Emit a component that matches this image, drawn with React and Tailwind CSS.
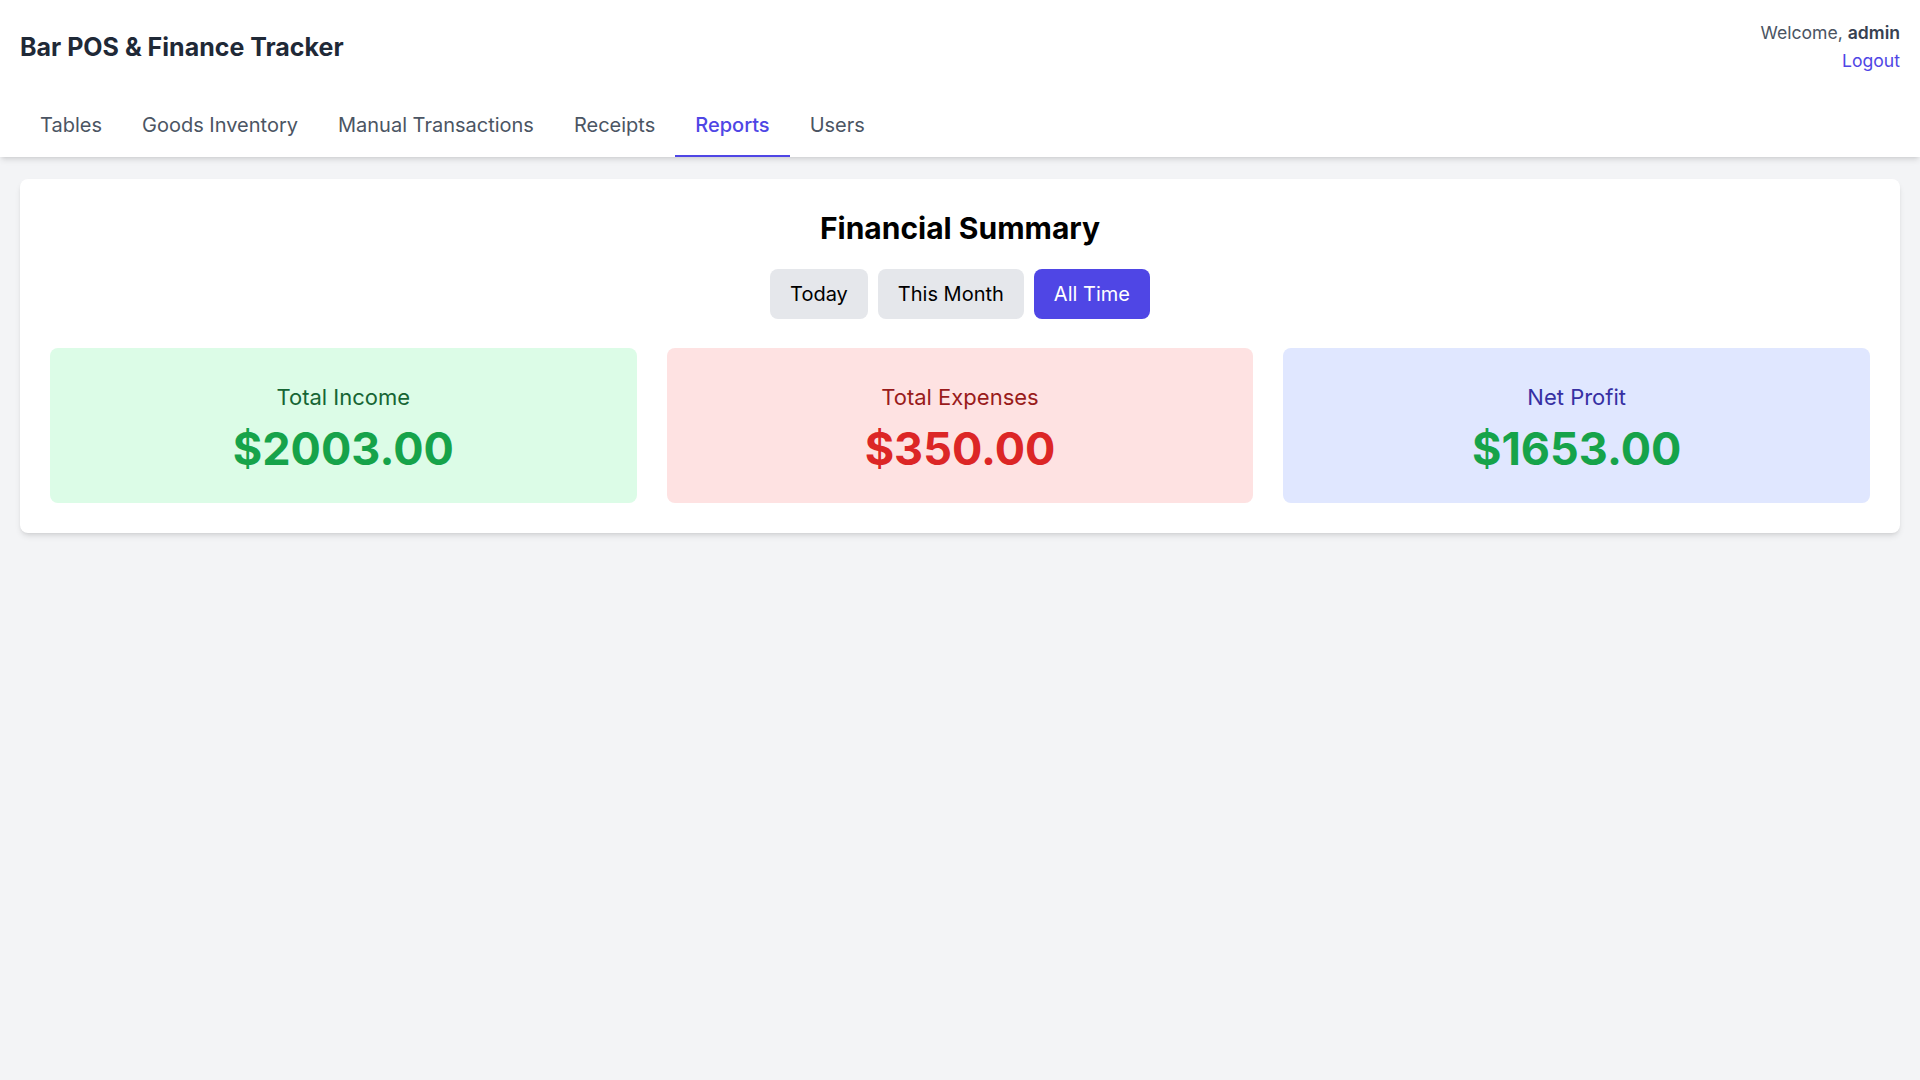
import React, { useState } from "react";

const tabs = ["Tables", "Goods Inventory", "Manual Transactions", "Receipts", "Reports", "Users"];
const ranges = ["Today", "This Month", "All Time"];

export default function App() {
  const [active, setActive] = useState("Reports");
  const [range, setRange] = useState("All Time");
  return (
    <div className="min-h-screen bg-[#f3f4f6] font-['Inter',sans-serif]">
      <header className="bg-white shadow-md">
        <div className="flex items-center justify-between px-5 pt-[19px] pb-[20px]">
          <h1 className="text-[25px] leading-8 font-bold text-[#1f2937]">Bar POS &amp; Finance Tracker</h1>
          <div className="flex flex-col items-end text-[17.6px] leading-[28px]">
            <span className="text-[#4b5563]">
              Welcome, <span className="font-semibold text-[#374151]">admin</span>
            </span>
            <a className="text-[#4f46e5]" href="#">Logout</a>
          </div>
        </div>
        <nav className="flex px-5">
          {tabs.map((t) => (
            <button
              key={t}
              onClick={() => setActive(t)}
              className={
                t === active
                  ? "border-b-2 border-[#4f46e5] px-5 py-4 text-xl leading-7 font-medium text-[#4f46e5]"
                  : "border-b-2 border-transparent px-5 py-4 text-xl leading-7 text-[#4b5563]"
              }
            >
              {t}
            </button>
          ))}
        </nav>
      </header>
      <main className="px-5 pt-[22px] pb-5">
        <section className="rounded-lg bg-white px-[30px] pt-[31px] pb-[30px] shadow-md">
          <h2 className="text-center text-3xl font-bold text-black">Financial Summary</h2>
          <div className="mt-[23px] flex justify-center gap-[10px]">
            {ranges.map((r) => (
              <button
                key={r}
                onClick={() => setRange(r)}
                className={
                  r === range
                    ? "rounded-lg bg-[#4f46e5] px-5 py-[11px] text-xl leading-7 text-white"
                    : "rounded-lg bg-[#e5e7eb] px-5 py-[11px] text-xl leading-7 text-black"
                }
              >
                {r}
              </button>
            ))}
          </div>
          <div className="mt-[29px] grid grid-cols-3 gap-[30px]">
            <div className="rounded-lg bg-[#dcfce7] pt-[35px] pb-[30px] text-center">
              <div className="text-[22px] leading-7 text-[#166534]">Total Income</div>
              <div className="mt-[14px] text-[45px] leading-[48px] font-bold text-[#16a34a]">$2003.00</div>
            </div>
            <div className="rounded-lg bg-[#fee2e2] pt-[35px] pb-[30px] text-center">
              <div className="text-[22px] leading-7 text-[#991b1b]">Total Expenses</div>
              <div className="mt-[14px] text-[45px] leading-[48px] font-bold text-[#dc2626]">$350.00</div>
            </div>
            <div className="rounded-lg bg-[#e0e7ff] pt-[35px] pb-[30px] text-center">
              <div className="text-[22px] leading-7 text-[#3730a3]">Net Profit</div>
              <div className="mt-[14px] text-[45px] leading-[48px] font-bold text-[#16a34a]">$1653.00</div>
            </div>
          </div>
        </section>
      </main>
    </div>
  );
}
